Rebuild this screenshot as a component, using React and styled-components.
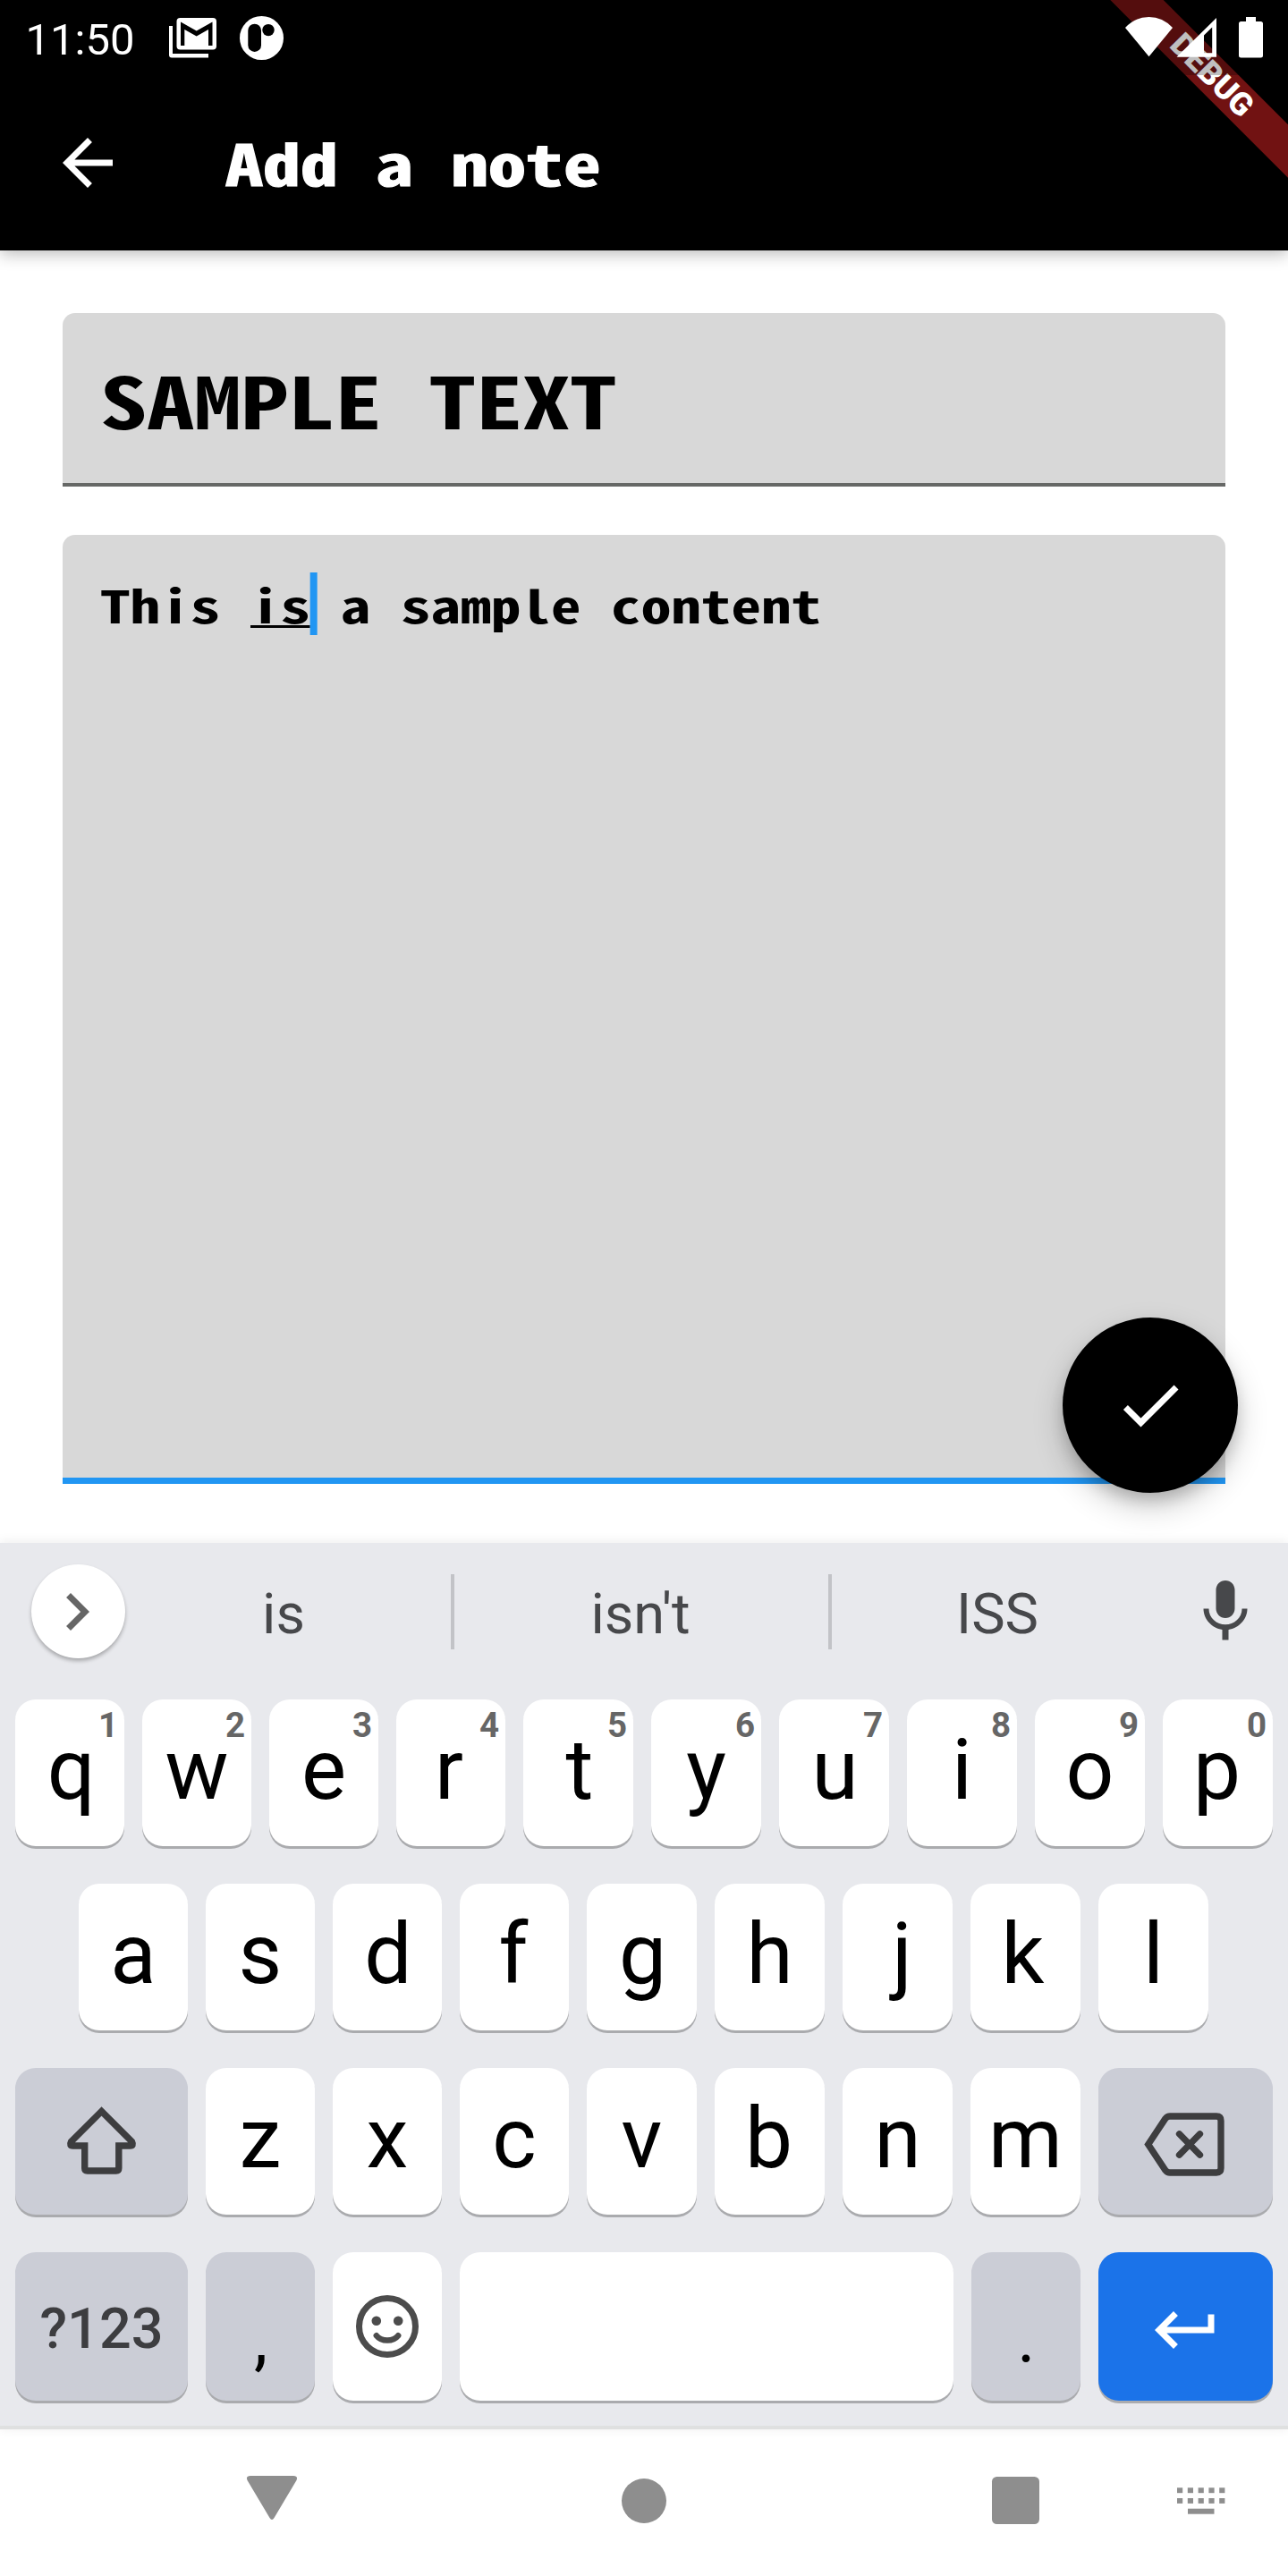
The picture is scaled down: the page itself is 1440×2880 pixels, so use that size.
import React from "react";
import styled, { createGlobalStyle, css } from "styled-components";

const GlobalStyle = createGlobalStyle`
  *, *::before, *::after { box-sizing: border-box; }
  html, body { margin: 0; padding: 0; background: #fff; }
  body { font-family: Roboto, "Noto Sans", sans-serif; }
`;

const mono = css`
  font-family: "Noto Sans Mono CJK SC", "Noto Sans Mono CJK JP", "DejaVu Sans Mono", monospace;
  font-weight: 700;
  white-space: pre;
  transform: scaleX(1.3333);
  transform-origin: left center;
`;

const Screen = styled.div`
  position: relative;
  display: flex;
  flex-direction: column;
  width: 1440px;
  height: 2880px;
  overflow: hidden;
  background: #fff;
`;

const Header = styled.header`
  position: relative;
  flex: none;
  height: 280px;
  background: #000;
  box-shadow: 0 4px 17px rgba(0, 0, 0, 0.27);
`;

const RibbonClip = styled.div`
  position: absolute;
  inset: 0;
  overflow: hidden;
`;

const Ribbon = styled.div`
  position: absolute;
  left: 1155px;
  top: 63px;
  width: 400px;
  height: 42px;
  display: flex;
  align-items: center;
  justify-content: center;
  transform: rotate(45deg);
  background: #711212;
  color: #fff;
  font-size: 35.7px;
  line-height: 42px;
  font-weight: 900;
`;

const StatusBar = styled.div`
  position: relative;
  display: flex;
  align-items: center;
  justify-content: space-between;
  height: 84px;
  padding: 0 28px;
  background: rgba(0, 0, 0, 0.25);
`;

const StatusGroup = styled.div`
  display: flex;
  align-items: center;
`;

const Clock = styled.span`
  width: 161px;
  padding: 5px 0 0 0.5px;
  color: #fff;
  font-size: 49px;
  line-height: 84px;
`;

const Glyph = styled.svg`
  display: block;
  flex: none;
  width: ${(p) => p.$w}px;
  height: ${(p) => p.$h || p.$w}px;
  margin: ${(p) => p.$margin || 0};
  overflow: visible;
`;

const AppBar = styled.div`
  position: relative;
  display: flex;
  align-items: center;
  height: 196px;
  padding-left: 56px;
`;

const Title = styled.h1`
  ${mono}
  margin: 0 0 3px 112px;
  font-size: 63px;
  line-height: 84px;
  color: #fff;
  -webkit-text-stroke: 1px #fff;
`;

const Form = styled.main`
  flex: none;
  height: 1445px;
  padding: 70px;
`;

const Field = styled.div`
  display: flex;
  align-items: flex-start;
  height: ${(p) => p.$height}px;
  margin-bottom: ${(p) => p.$after || 0}px;
  padding: ${(p) => p.$top}px 42px 0;
  border-bottom: ${(p) => p.$line};
  border-radius: 14px 14px 0 0;
  background: #d8d8d8;
`;

const NoteTitle = styled.div`
  ${mono}
  font-size: 78.75px;
  line-height: 110px;
  color: #000;
`;

const NoteBody = styled.div`
  ${mono}
  display: flex;
  font-size: 50.4px;
  line-height: 71px;
  color: #000;
`;

const Composing = styled.span`
  position: relative;
  &::before {
    content: "";
    position: absolute;
    left: 0;
    right: 0;
    top: 59px;
    height: 3px;
    background: #000;
  }
  &::after {
    content: "";
    position: absolute;
    left: 100%;
    top: 0;
    width: 5.25px;
    height: 70px;
    background: #2196f3;
  }
`;

const SaveButton = styled.button`
  position: absolute;
  left: 1188px;
  top: 1473px;
  display: flex;
  align-items: center;
  justify-content: center;
  width: 196px;
  height: 196px;
  padding: 0;
  border: 0;
  border-radius: 50%;
  background: #000;
  box-shadow: 0 10px 18px -3px rgba(0, 0, 0, 0.2), 0 15px 35px rgba(0, 0, 0, 0.2);
`;

const Keyboard = styled.section`
  position: relative;
  flex: none;
  height: 991px;
  border-bottom: 4px solid #dfe0e0;
  background: #e8e9ed;
  box-shadow: 0 -1px 12px rgba(0, 0, 0, 0.08);
`;

const Suggestions = styled.div`
  display: grid;
  grid-template-columns: 105px 364px 4px 418px 4px 372px 84px;
  align-items: center;
  height: 154px;
  padding-left: 35px;
`;

const Expand = styled.div`
  display: flex;
  align-items: center;
  justify-content: center;
  width: 105px;
  height: 105px;
  margin-bottom: 1px;
  border-radius: 50%;
  background: #fff;
  box-shadow: 0 3px 4px rgba(0, 0, 0, 0.28);
`;

const Suggestion = styled.span`
  padding: 5px ${(p) => p.$inset || 2}px 0 0;
  color: #47484b;
  font-size: 63px;
  line-height: 74px;
  text-align: center;
`;

const Divider = styled.span`
  width: 4px;
  height: 84px;
  background: #c2c3c7;
`;

const Rows = styled.div`
  display: flex;
  flex-direction: column;
  gap: 42px;
  padding: 21px 17px 0;
`;

const Row = styled.div`
  display: grid;
  grid-template-columns: ${(p) => p.$cols};
  gap: 20px;
  height: ${(p) => p.$height || 164}px;
  padding: 0 ${(p) => p.$inset || 0}px;
`;

const tones = { light: "#fff", dark: "#cbcdd6", action: "#1b73e9" };

const KeyCap = styled.div`
  position: relative;
  display: flex;
  align-items: center;
  justify-content: center;
  padding-bottom: 6px;
  border-radius: 23px;
  background: ${(p) => tones[p.$tone || "light"]};
  box-shadow: 0 3px 0 #aaabae;
  color: #000;
  font-size: 94.5px;
  line-height: 110px;
  ${(p) =>
    p.$kind === "icon" &&
    css`
      padding: 0;
    `}
  ${(p) =>
    p.$kind === "mark" &&
    css`
      padding: 28px 0 0 1px;
      font-size: 77px;
    `}
  ${(p) =>
    p.$kind === "label" &&
    css`
      padding: 5px 0 0;
      color: #3d3d40;
      font-size: 63px;
      font-weight: 500;
    `}
`;

/* Letters are centred by their ink, so some move off the advance centre. */
const Letter = styled.span`
  transform: translateX(${(p) => p.$nudge || 0}px);
`;

const Hint = styled.span`
  position: absolute;
  top: 6px;
  right: 7px;
  color: #666;
  font-size: 38.5px;
  line-height: 46px;
  font-weight: 700;
`;

const NavBar = styled.nav`
  display: grid;
  grid-template-columns: 416px 416px 416px 192px;
  height: 164px;
  padding-top: 52px;
`;

const NavSlot = styled.div`
  display: flex;
  justify-content: center;
  padding-left: ${(p) => p.$shift}px;
`;

const topRow = "qwertyuiop".split("");
const homeRow = "asdfghjkl".split("");
const bottomRow = "zxcvbnm".split("");
const nudges = { q: 1.5, r: -2, t: 1.5, p: -1, d: 1, f: -1, g: 1, j: 5, k: -3, b: -1, u: 1 };

function StatusIconsLeft() {
  return (
    <>
      <Glyph $w={54} $h={46} viewBox="0 0 54 46" $margin="0 25px 0 0">
        <path d="M0 10h4v31h40v4.600H3a3 3 0 0 1-3-3z" fill="#fff" />
        <rect x="8.500" y="1" width="44.500" height="35.600" rx="4" fill="#fff" />
        <path d="M13 5.500 30.700 15.500 48.500 5.500V32h-4.500V14L30.700 21.500 17.300 14V32H13z" fill="#000" />
      </Glyph>
      <Glyph $w={49} viewBox="0 0 49 49">
        <circle cx="24.500" cy="24.500" r="24.500" fill="#fff" />
        <rect x="9.300" y="8.700" width="14.700" height="31.300" rx="7.350" fill="#000" />
        <circle cx="32" cy="15.600" r="6.700" fill="#000" />
      </Glyph>
    </>
  );
}

function StatusIconsRight() {
  return (
    <Glyph $w={154} $h={46} viewBox="1258 19 154 46">
      <path d="M1258 31Q1269 19 1284.500 19T1311 31L1284.500 63.200z" fill="#fff" />
      <path
        fillRule="evenodd"
        d="M1315.500 63.700 1360 20V63.700zM1346 39.500V59.300H1355.200V30.500z"
        fill="#fff"
      />
      <path
        d="M1393 19h11v5h5.500a2.500 2.500 0 0 1 2.500 2.500V62a2.500 2.500 0 0 1-2.500 2.500h-22A2.500 2.500 0 0 1 1385 62V26.500A2.500 2.500 0 0 1 1387.500 24h5.500z"
        fill="#fff"
      />
    </Glyph>
  );
}

const ShiftIcon = () => (
  <Glyph $w={84} viewBox="0 0 84 84">
    <path
      d="M41.500 8.500 7.500 42.500Q5.200 47 9.500 47H22.700V72Q22.700 75 25.700 75H57.800Q60.800 75 60.800 72V47H73.500Q77.800 47 75.500 42.500Z"
      fill="none"
      stroke="#3d3d3f"
      strokeWidth="7.400"
    />
  </Glyph>
);

const BackspaceIcon = () => (
  <Glyph $w={96} $h={84} viewBox="0 0 96 84">
    <path
      d="M5.700 45.500 25 16.500Q27 14 30 14H82Q87 14 87 19V72Q87 77 82 77H30Q27 77 25 74.500Z"
      fill="none"
      stroke="#3d3d3f"
      strokeWidth="7.300"
    />
    <path
      d="M40.500 33.800 63.500 57.200M63.500 33.800 40.500 57.200"
      stroke="#3d3d3f"
      strokeWidth="7.300"
      strokeLinecap="round"
    />
  </Glyph>
);

const EmojiIcon = () => (
  <Glyph $w={70} viewBox="0 0 70 70">
    <circle cx="35" cy="35" r="31.500" fill="none" stroke="#4c4c4c" strokeWidth="7" />
    <circle cx="22.800" cy="28.700" r="5.300" fill="#4c4c4c" />
    <circle cx="47.200" cy="28.700" r="5.300" fill="#4c4c4c" />
    <path
      d="M22.800 45.200Q27 50.500 35 50.500T47.200 45.200"
      fill="none"
      stroke="#4c4c4c"
      strokeWidth="6.500"
      strokeLinecap="round"
    />
  </Glyph>
);

export default function App() {
  return (
    <>
      <GlobalStyle />
      <Screen>
        <Header>
          <RibbonClip>
            <Ribbon>DEBUG</Ribbon>
          </RibbonClip>
          <StatusBar>
            <StatusGroup>
              <Clock>11:50</Clock>
              <StatusIconsLeft />
            </StatusGroup>
            <StatusIconsRight />
          </StatusBar>
          <AppBar>
            <Glyph $w={84} viewBox="0 0 24 24" fill="#fff">
              <path d="M20 11H7.830l5.590-5.590L12 4l-8 8 8 8 1.410-1.410L7.830 13H20v-2z" />
            </Glyph>
            <Title>Add a note</Title>
          </AppBar>
        </Header>

        <Form>
          <Field $height={194} $after={54} $top={41} $line="4px solid #666866">
            <NoteTitle>SAMPLE TEXT</NoteTitle>
          </Field>
          <Field $height={1060.5} $top={42} $line="7px solid #2196f3">
            <NoteBody>
              {"This "}
              <Composing>is</Composing>
              {" a sample content"}
            </NoteBody>
          </Field>
        </Form>

        <SaveButton aria-label="Save note">
          <Glyph $w={84} viewBox="0 0 24 24" fill="#fff">
            <path d="M9 16.170L4.830 12l-1.420 1.410L9 19 21 7l-1.410-1.410z" />
          </Glyph>
        </SaveButton>

        <Keyboard>
          <Suggestions>
            <Expand>
              <Glyph $w={84} viewBox="0 0 24 24" fill="#666" $margin="0 3px 0 0">
                <path d="M10 6L8.590 7.410 13.170 12l-4.580 4.590L10 18l6-6z" />
              </Glyph>
            </Expand>
            <Suggestion $inset={10}>is</Suggestion>
            <Divider />
            <Suggestion>isn't</Suggestion>
            <Divider />
            <Suggestion>ISS</Suggestion>
            <Glyph $w={84} viewBox="0 0 24 24" fill="#47484b" $margin="0 0 0 26px">
              <path d="M12 14c1.660 0 2.990-1.340 2.990-3L15 5c0-1.660-1.340-3-3-3S9 3.340 9 5v6c0 1.660 1.340 3 3 3zm5.300-3c0 3-2.540 5.100-5.300 5.100S6.700 14 6.700 11H5c0 3.410 2.720 6.230 6 6.720V21h2v-3.280c3.280-.48 6-3.300 6-6.720h-1.700z" />
            </Glyph>
          </Suggestions>

          <Rows>
            <Row $cols="repeat(4, 122px) repeat(6, 123px)">
              {topRow.map((k, i) => (
                <KeyCap key={k}>
                  <Letter $nudge={nudges[k]}>{k}</Letter>
                  <Hint>{(i + 1) % 10}</Hint>
                </KeyCap>
              ))}
            </Row>
            <Row $cols="repeat(4, 122px) repeat(5, 123px)" $inset={71}>
              {homeRow.map((k) => (
                <KeyCap key={k}>
                  <Letter $nudge={nudges[k]}>{k}</Letter>
                </KeyCap>
              ))}
            </Row>
            <Row $cols="193px repeat(3, 122px) repeat(4, 123px) 195px">
              <KeyCap $tone="dark" $kind="icon">
                <ShiftIcon />
              </KeyCap>
              {bottomRow.map((k) => (
                <KeyCap key={k}>
                  <Letter $nudge={nudges[k]}>{k}</Letter>
                </KeyCap>
              ))}
              <KeyCap $tone="dark" $kind="icon">
                <BackspaceIcon />
              </KeyCap>
            </Row>
            <Row $cols="193px 122px 122px 552px 122px 195px" $height={166}>
              <KeyCap $tone="dark" $kind="label">?123</KeyCap>
              <KeyCap $tone="dark" $kind="mark">,</KeyCap>
              <KeyCap $kind="icon">
                <EmojiIcon />
              </KeyCap>
              <KeyCap />
              <KeyCap $tone="dark" $kind="mark">.</KeyCap>
              <KeyCap $tone="action" $kind="icon">
                <Glyph $w={84} viewBox="0 0 24 24" fill="#fff" $margin="8px 0 0">
                  <path d="M19 7v4H5.830l3.580-3.590L8 6l-6 6 6 6 1.410-1.410L5.830 13H21V7z" />
                </Glyph>
              </KeyCap>
            </Row>
          </Rows>
        </Keyboard>

        <NavBar>
          <NavSlot $shift={192}>
            <Glyph $w={56} $h={49} viewBox="0 0 56 49">
              <path d="M4 0H52Q57.500 0 55.500 5L30.500 47Q28 51 25.500 47L.5 5Q-1.500 0 4 0z" fill="#8e8e8e" />
            </Glyph>
          </NavSlot>
          <NavSlot $shift={192}>
            <Glyph $w={50} viewBox="0 0 50 50" $margin="3px 0 0">
              <circle cx="25" cy="25" r="25" fill="#8e8e8e" />
            </Glyph>
          </NavSlot>
          <NavSlot $shift={190}>
            <Glyph $w={53} viewBox="0 0 53 53" $margin="1px 0 0">
              <rect width="53" height="53" rx="5.500" fill="#8e8e8e" />
            </Glyph>
          </NavSlot>
          <NavSlot $shift={0}>
            <Glyph $w={54} $h={30} viewBox="0 0 54 30" $margin="13px 0 0 -2px" fill="#8e8e8e">
              {[0, 1, 2, 3, 4].map((c) => (
                <React.Fragment key={c}>
                  <rect x={c * 11.8} y="0.300" width="6.200" height="5.900" />
                  <rect x={c * 11.8} y="12" width="6.200" height="5.900" />
                </React.Fragment>
              ))}
              <rect x="12" y="23.700" width="29.500" height="6" />
            </Glyph>
          </NavSlot>
        </NavBar>
      </Screen>
    </>
  );
}
